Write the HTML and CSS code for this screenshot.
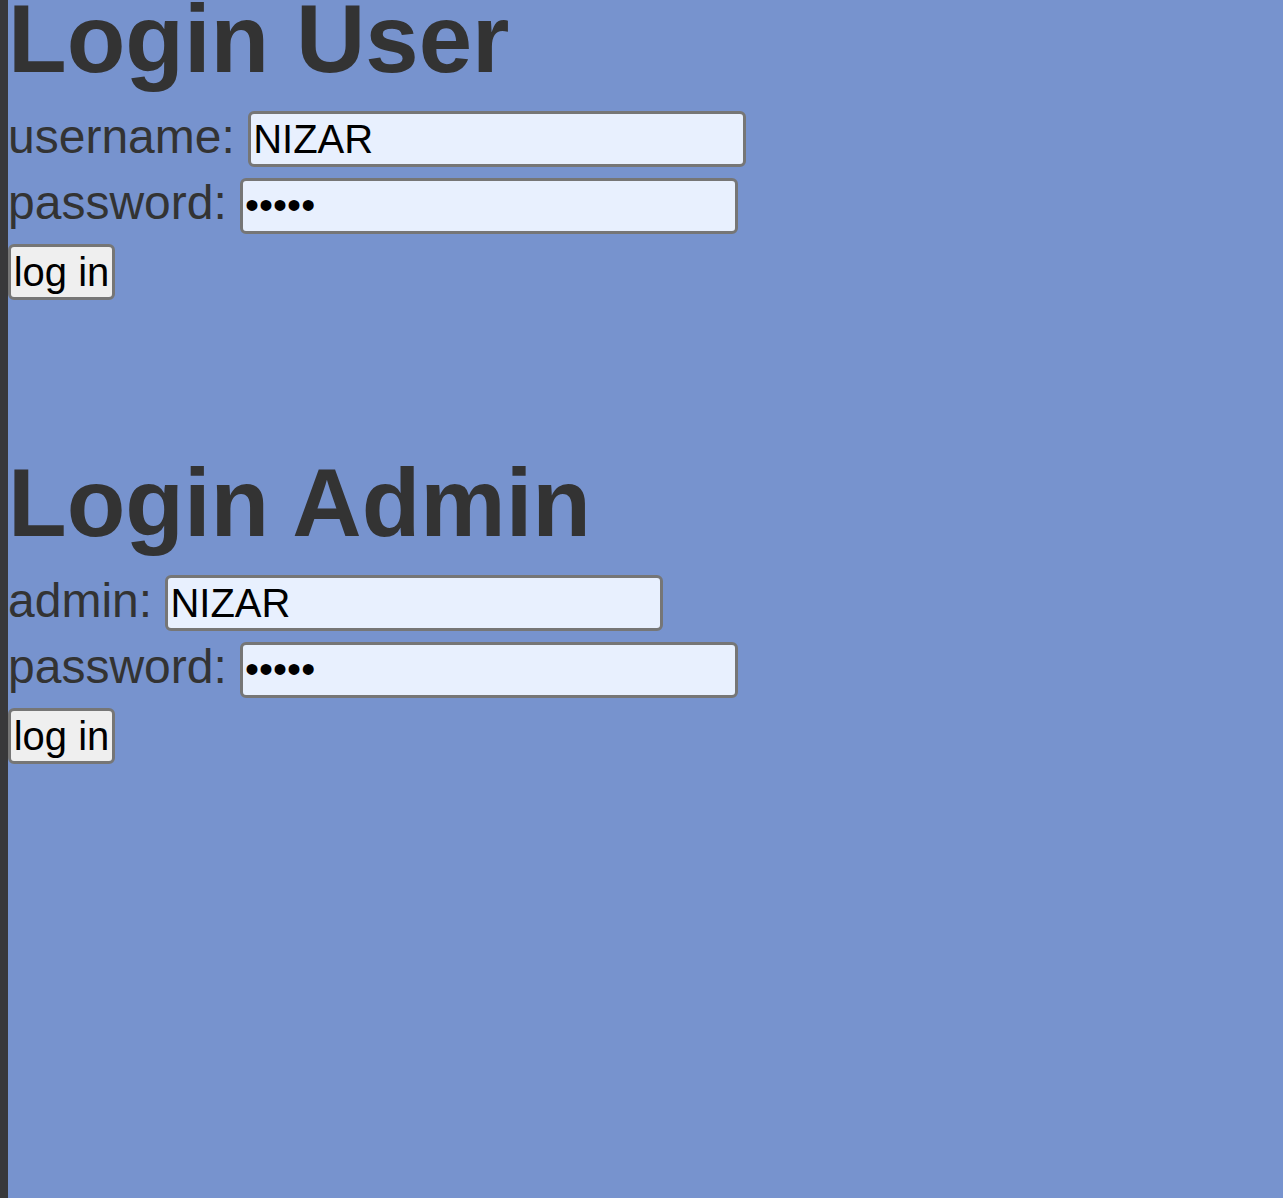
FILE: index.html
```html
<!DOCTYPE html>
<html lang="en">
<head>
<meta charset="utf-8">
<title>Login</title>
<link rel="stylesheet" href="styles.css">
</head>
<body>
  <form class="section">
    <h1 class="title">Login User</h1>
    <div class="row"><label class="label" for="user">username:</label> <input class="field" id="user" type="text" value="NIZAR"></div>
    <div class="row"><label class="label" for="upass">password:</label> <input class="field" id="upass" type="password" value="12345"></div>
    <div class="row"><button class="btn" type="button">log in</button></div>
  </form>
  <form class="section">
    <h1 class="title">Login Admin</h1>
    <div class="row"><label class="label" for="admin">admin:</label> <input class="field" id="admin" type="text" value="NIZAR"></div>
    <div class="row"><label class="label" for="apass">password:</label> <input class="field" id="apass" type="password" value="12345"></div>
    <div class="row"><button class="btn" type="button">log in</button></div>
  </form>
</body>
</html>
```
FILE: styles.css
```css
html {
  margin: 0;
}

body {
  margin: 0;
  min-height: 100vh;
  box-sizing: border-box;
  border-left: 8px solid #38383a;
  background: #7793ce;
  color: #333333;
  font-family: "Liberation Sans", Arial, sans-serif;
}

.section {
  margin: 0;
}

.section + .section {
  margin-top: 161px;
}

.title {
  margin: 0 0 26.5px 0;
  font-size: 96px;
  font-weight: 700;
  line-height: 77px;
  color: #333333;
}

.row {
  font-size: 48px;
  line-height: 66.5px;
  white-space: nowrap;
}

.label {
  color: #333333;
}

.field {
  box-sizing: border-box;
  width: 498px;
  height: 56px;
  margin: 0;
  padding: 1px 2px;
  border: 3px solid #767676;
  border-radius: 6px;
  background: #e8f0fe;
  color: #000000;
  font-family: "Liberation Sans", Arial, sans-serif;
  font-size: 40px;
  vertical-align: baseline;
  outline: none;
}

.btn {
  box-sizing: border-box;
  width: 107px;
  height: 56px;
  margin: 0;
  padding: 0;
  border: 3px solid #767676;
  border-radius: 6px;
  background: #efefef;
  color: #000000;
  font-family: "Liberation Sans", Arial, sans-serif;
  font-size: 40px;
  vertical-align: baseline;
}
```
